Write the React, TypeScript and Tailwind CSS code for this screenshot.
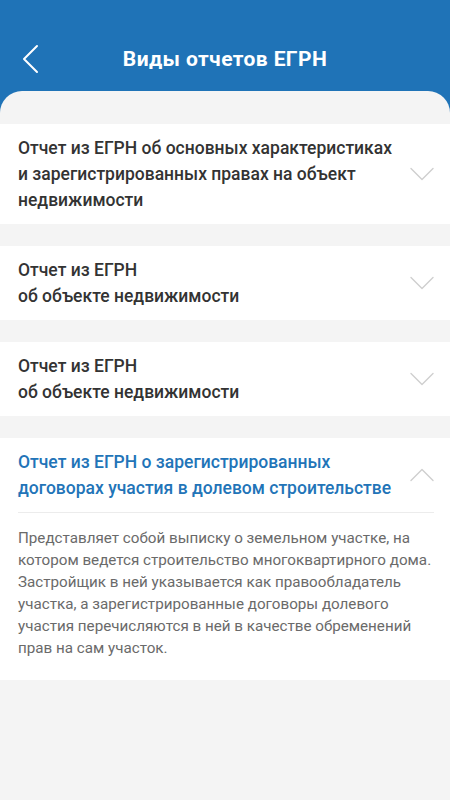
const font = { fontFamily: "Roboto, 'Noto Sans', sans-serif" };

const items = [
  {
    lines: ["Отчет из ЕГРН об основных характеристиках", "и зарегистрированных правах на объект", "недвижимости"],
  },
  { lines: ["Отчет из ЕГРН", "об объекте недвижимости"] },
  { lines: ["Отчет из ЕГРН", "об объекте недвижимости"] },
];

function Chevron({ up }: { up?: boolean }) {
  return (
    <svg width="24" height="14" viewBox="0 0 24 14" fill="none" className="shrink-0">
      <path
        d={up ? "M1 12.5 L12 1.5 L23 12.5" : "M1 1.5 L12 12.5 L23 1.5"}
        stroke="#cfcfcf"
        strokeWidth="1.4"
        strokeLinecap="round"
        strokeLinejoin="round"
      />
    </svg>
  );
}

export default function App() {
  return (
    <div className="w-[450px] h-[800px] bg-[#1f73b7] flex flex-col" style={font}>
      <div className="h-[91px] pt-[27px] flex items-center relative shrink-0">
        <svg width="18" height="30" viewBox="0 0 18 30" fill="none" className="ml-[21px]">
          <path d="M16 2 L3 15 L16 28" stroke="#ffffff" strokeWidth="2" strokeLinecap="round" strokeLinejoin="round" />
        </svg>
        <h1 className="absolute left-0 right-0 text-center text-white text-[21px] tracking-[0.4px] font-bold leading-none">
          Виды отчетов ЕГРН
        </h1>
      </div>
      <div className="flex-1 bg-[#f4f4f4] rounded-t-[22px] pt-[33px] flex flex-col gap-[22px]">
        {items.map((item, i) => (
          <div key={i} className="bg-white pl-[18px] pr-[16px] py-[11px] flex items-center justify-between">
            <p className="text-[17.5px] leading-[26px] text-[#333333] font-medium">
              {item.lines.map((l, j) => (
                <span key={j} className="block">{l}</span>
              ))}
            </p>
            <Chevron />
          </div>
        ))}
        <div className="bg-white px-[16px] pl-[18px] pt-[11px] pb-[21px]">
          <div className="flex items-center justify-between pb-[11px] border-b border-[#ececec]">
            <p className="text-[17.5px] leading-[26px] text-[#2274b8] font-medium">
              <span className="block">Отчет из ЕГРН о зарегистрированных</span>
              <span className="block">договорах участия в долевом строительстве</span>
            </p>
            <Chevron up />
          </div>
          <p className="pt-[14px] text-[15.2px] leading-[22px] text-[#6a6a6a]">
            Представляет собой выписку о земельном участке, на котором ведется строительство многоквартирного дома.
            Застройщик в ней указывается как правообладатель участка, а зарегистрированные договоры долевого
            участия перечисляются в ней в качестве обременений прав на сам участок.
          </p>
        </div>
      </div>
    </div>
  );
}
